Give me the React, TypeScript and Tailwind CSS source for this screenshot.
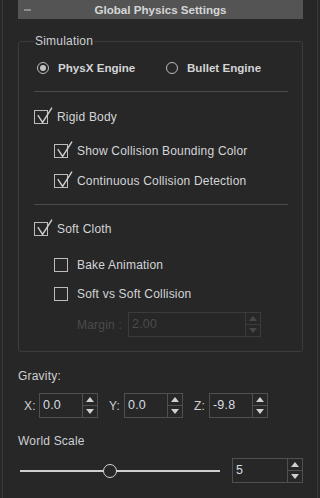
import React from "react";

const font = { fontFamily: '"Liberation Sans", Arial, sans-serif' };

function Check({ checked }: { checked?: boolean }) {
  return (
    <span className="relative block h-[14px] w-[14px] shrink-0 border border-[#bcbcbc]">
      {checked && (
        <svg
          className="absolute left-[-1px] top-[-5px]"
          width="20"
          height="19"
          viewBox="0 0 20 19"
          fill="none"
        >
          <path
            d="M3.8 9.2 L8.6 16.4 L18 1.6"
            stroke="#cfcfcf"
            strokeWidth="1.4"
          />
        </svg>
      )}
    </span>
  );
}

function CheckRow({
  label,
  checked,
  indent,
  className,
}: {
  label: string;
  checked?: boolean;
  indent?: boolean;
  className?: string;
}) {
  return (
    <div
      className={`flex h-[20px] items-center gap-[9px] ${indent ? "ml-[20px]" : ""} ${className ?? ""}`}
    >
      <Check checked={checked} />
      <span className="text-[12px] text-[#d3d5d7]">{label}</span>
    </div>
  );
}

function Radio({ on, label }: { on?: boolean; label: string }) {
  return (
    <div className="flex items-center gap-[9px]">
      <span className="flex h-[12px] w-[12px] items-center justify-center rounded-full border border-[#bdbdbd]">
        {on && <span className="h-[6px] w-[6px] rounded-full bg-[#c4c4c4]" />}
      </span>
      <span className="text-[11.6px] font-bold tracking-normal text-[#d3d5d7]">{label}</span>
    </div>
  );
}

function Arrows({ dim }: { dim?: boolean }) {
  const c = dim ? "#474747" : "#d0d0d0";
  const b = dim ? "border-[#3b3b3b]" : "border-[#505050]";
  return (
    <div className={`flex w-[15px] flex-col border-l ${b}`}>
      <div className={`flex flex-1 items-center justify-center border-b ${b}`}>
        <svg width="8" height="5" viewBox="0 0 8 5">
          <path d="M4 0 L8 5 L0 5 Z" fill={c} />
        </svg>
      </div>
      <div className="flex flex-1 items-center justify-center">
        <svg width="8" height="5" viewBox="0 0 8 5">
          <path d="M0 0 L8 0 L4 5 Z" fill={c} />
        </svg>
      </div>
    </div>
  );
}

function Spin({
  value,
  w,
  dim,
}: {
  value: string;
  w: string;
  dim?: boolean;
}) {
  return (
    <div
      className={`flex h-[25px] ${w} border ${dim ? "border-[#3b3b3b]" : "border-[#505050]"}`}
    >
      <div
        className={`flex flex-1 items-center pl-[3px] text-[12.5px] ${dim ? "text-[#4b4b4b]" : "text-[#d8dce0]"}`}
      >
        {value}
      </div>
      <Arrows dim={dim} />
    </div>
  );
}

export default function App() {
  return (
    <div
      className="h-[498px] w-[320px] overflow-hidden bg-[#272727] tracking-[0.2px]"
      style={font}
    >
      <div className="ml-[2px] flex h-full w-[316px] flex-col border-x border-[#3a3a3a] pl-[15px]">
        {/* header */}
        <div className="relative flex h-[19px] w-[285px] items-center justify-center bg-[#545454]">
          <span className="absolute left-[6px] top-[9px] h-[2px] w-[7px] bg-[#8c8c8c]" />
          <span className="text-[11.6px] font-bold tracking-normal text-[#d4d6d8]">
            Global Physics Settings
          </span>
        </div>

        {/* simulation group */}
        <div className="relative mt-[22px] flex h-[311px] w-[285px] flex-col rounded-[3px] border border-[#3c3c3c] pl-[15px] pr-[14px]">
          <span className="absolute left-[15px] top-[-8px] bg-[#272727] px-[1px] text-[12px] leading-[14px] text-[#cdd0d3]">
            Simulation
          </span>

          <div className="mt-[16px] flex h-[20px] items-center pl-[3px]">
            <div className="w-[129px]">
              <Radio on label="PhysX Engine" />
            </div>
            <Radio label="Bullet Engine" />
          </div>

          <div className="mt-[13px] h-px bg-[#4a4a4a]" />

          <CheckRow className="mt-[15px]" checked label="Rigid Body" />
          <CheckRow className="mt-[14px]" indent checked label="Show Collision Bounding Color" />
          <CheckRow className="mt-[10px]" indent checked label="Continuous Collision Detection" />

          <div className="mt-[13px] h-px bg-[#4a4a4a]" />

          <CheckRow className="mt-[14px]" checked label="Soft Cloth" />
          <CheckRow className="mt-[16px]" indent label="Bake Animation" />
          <CheckRow className="mt-[9px]" indent label="Soft vs Soft Collision" />

          <div className="ml-[43px] mt-[8px] flex items-center">
            <span className="w-[51px] text-[12px] text-[#4b4b4b]">Margin :</span>
            <Spin value="2.00" w="w-[133px]" dim />
          </div>
        </div>

        {/* gravity */}
        <div className="mt-[16px] text-[12px] leading-[16px] text-[#cdd0d3]">Gravity:</div>
        <div className="mt-[9px] flex items-center pl-[6px]">
          <span className="w-[15px] text-[12px] text-[#cdd0d3]">X:</span>
          <Spin value="0.0" w="w-[59px]" />
          <span className="ml-[11px] w-[15px] text-[12px] text-[#cdd0d3]">Y:</span>
          <Spin value="0.0" w="w-[59px]" />
          <span className="ml-[11px] w-[15px] text-[12px] text-[#cdd0d3]">Z:</span>
          <Spin value="-9.8" w="w-[59px]" />
        </div>

        {/* world scale */}
        <div className="mt-[15px] text-[12px] leading-[16px] text-[#cdd0d3]">World Scale</div>
        <div className="mt-[9px] flex items-center">
          <div className="relative ml-[2px] flex h-[25px] w-[200px] items-center">
            <div className="h-[2px] w-full bg-[#cfcfcf]" />
            <span className="absolute left-[83px] top-[6px] h-[14px] w-[14px] rounded-full border-[1.5px] border-[#d4d4d4] bg-[#272727]" />
          </div>
          <div className="ml-[12px]">
            <Spin value="5" w="w-[71px]" />
          </div>
        </div>
      </div>
    </div>
  );
}
